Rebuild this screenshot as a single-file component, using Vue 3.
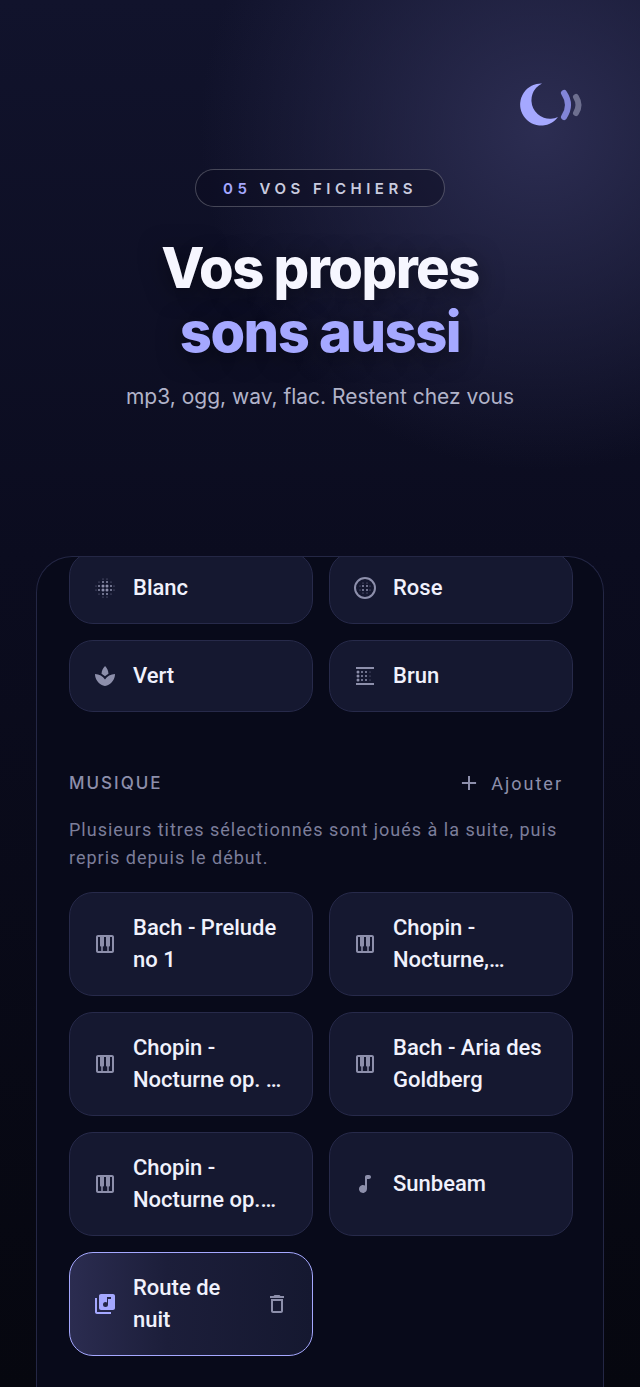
<template>
  <div class="page">
    <header class="hero">
      <div class="logo-row">
        <svg class="logo" viewBox="520 80 64 48" aria-label="logo">
          <path d="M542 83.5A21 21 0 1 0 558 117A18 18 0 0 1 542 83.5Z" fill="#a5a8ff" />
          <path d="M564 93Q572 105 564 117" class="wave wave-one" />
          <path d="M576 97Q581 105 576 113" class="wave wave-two" />
        </svg>
      </div>
      <div class="pill"><span class="pill-num">05</span> VOS FICHIERS</div>
      <h1 class="title">Vos propres<br /><span class="accent">sons aussi</span></h1>
      <p class="subtitle">mp3, ogg, wav, flac. Restent chez vous</p>
    </header>

    <main class="panel">
      <div class="panel-inner">
        <div class="grid">
          <button v-for="noise in noises" :key="noise.name" class="card">
            <svg class="icon" viewBox="0 0 24 24">
              <template v-if="noise.ring"><circle cx="12" cy="12" r="10" fill="none" stroke="currentColor" stroke-width="2" /></template>
              <template v-if="noise.lines"><path d="M3 3h18v2H3zM3 19h18v2H3z" /></template>
              <circle v-for="(d, i) in noise.dots" :key="i" :cx="d[0]" :cy="d[1]" :r="d[2]" />
              <path v-if="noise.path" :d="noise.path" />
            </svg>
            <span class="card-label">{{ noise.name }}</span>
          </button>
        </div>

        <section class="music">
          <div class="section-head">
            <span class="section-title">MUSIQUE</span>
            <span class="add">
              <svg class="add-icon" viewBox="0 0 24 24"><path d="M12 3.5v17M3.5 12h17" /></svg>
              Ajouter
            </span>
          </div>
          <p class="hint">Plusieurs titres sélectionnés sont joués à la suite, puis repris depuis le début.</p>
          <div class="grid">
            <button v-for="track in tracks" :key="track.name" class="card" :class="{ selected: track.own }">
              <svg class="icon" viewBox="0 0 24 24">
                <path :d="track.own ? libraryPath : track.note ? notePath : pianoPath" fill-rule="evenodd" />
              </svg>
              <span class="card-label clamp">{{ track.name }}</span>
              <svg v-if="track.own" class="icon trash" viewBox="0 0 24 24"><path :d="trashPath" /></svg>
            </button>
          </div>
        </section>
      </div>
    </main>
  </div>
</template>

<script setup>
const pianoPath = 'M19 3H5C3.9 3 3 3.9 3 5v14c0 1.1.9 2 2 2h14c1.1 0 2-.9 2-2V5C21 3.9 20.1 3 19 3zM14 14.5h.25V19h-4.5v-4.5H10c.55 0 1-.45 1-1V5h2v8.5C13 14.05 13.45 14.5 14 14.5zM5 5h2v8.5c0 .55.45 1 1 1h.25V19H5V5zM19 19h-3.25v-4.5H16c.55 0 1-.45 1-1V5h2V19z'
const notePath = 'M12 5v8.55c-.94-.54-2.1-.75-3.33-.32-1.34.47-2.37 1.67-2.61 3.07-.46 2.74 1.86 5.08 4.59 4.65 1.96-.31 3.35-2.11 3.35-4.1V7h2c1.1 0 2-.9 2-2s-.9-2-2-2h-2c-1.1 0-2 .9-2 2z'
const libraryPath = 'M20 2H8c-1.1 0-2 .9-2 2v12c0 1.1.9 2 2 2h12c1.1 0 2-.9 2-2V4c0-1.1-.9-2-2-2zm-2 5h-3v5.5a2.5 2.5 0 1 1-2.5-2.5c.57 0 1.08.19 1.5.51V5h4v2zM4 6H2v14c0 1.1.9 2 2 2h14v-2H4V6z'
const trashPath = 'M6 19c0 1.1.9 2 2 2h8c1.1 0 2-.9 2-2V7H6v12zM8 9h8v10H8V9zm7.5-5l-1-1h-5l-1 1H5v2h14V4h-3.5z'
const leafPath = 'M15.49 9.63c-.18-2.79-1.31-5.51-3.43-7.63-2.14 2.14-3.32 4.86-3.55 7.63 1.28.68 2.46 1.56 3.49 2.63 1.03-1.06 2.21-1.94 3.49-2.63zM12 15.45C9.85 12.17 6.18 10 2 10c0 5.32 3.36 9.82 8.03 11.49.63.23 1.29.4 1.97.51.68-.12 1.33-.29 1.97-.51C18.64 19.82 22 15.32 22 10c-4.18 0-7.85 2.17-10 5.45z'

function blurOn() {
  const pos = [3, 6, 10, 14, 18, 21]
  const size = { 3: 0, 21: 0, 6: 1, 18: 1, 10: 2, 14: 2 }
  const dots = []
  for (const x of pos) {
    for (const y of pos) {
      const a = size[x]
      const b = size[y]
      if (a + b < 2) continue
      dots.push([x, y, a + b >= 4 ? 1.5 : a + b === 3 ? 1 : 0.5])
    }
  }
  return dots
}

function blurCircular() {
  const pos = [7, 10, 14, 17]
  const dots = []
  for (const x of pos) {
    for (const y of pos) {
      const inX = x === 10 || x === 14
      const inY = y === 10 || y === 14
      if (inX && inY) dots.push([x, y, 1])
      else if (inX || inY) dots.push([x, y, 0.5])
    }
  }
  return dots
}

function blurLinear() {
  const dots = []
  for (const y of [8, 12, 16]) {
    dots.push([5, y, 1.5], [9, y, 1], [13, y, 1], [17, y, 0.5])
  }
  return dots
}

const noises = [
  { name: 'Blanc', dots: blurOn() },
  { name: 'Rose', dots: blurCircular(), ring: true },
  { name: 'Vert', path: leafPath },
  { name: 'Brun', dots: blurLinear(), lines: true },
]

const tracks = [
  { name: 'Bach - Prelude no 1' },
  { name: 'Chopin - Nocturne, Lento con gran espressione' },
  { name: 'Chopin - Nocturne op. 9 no 2' },
  { name: 'Bach - Aria des Goldberg' },
  { name: 'Chopin - Nocturne op. 55 no 1' },
  { name: 'Sunbeam', note: true },
  { name: 'Route de nuit', own: true },
]
</script>

<style scoped>
.page {
  width: 640px;
  height: 1387px;
  overflow: hidden;
  display: flex;
  flex-direction: column;
  font-family: Inter, sans-serif;
  color: #f4f5ff;
  background:
    radial-gradient(circle 340px at 540px 130px, #2c2d52 0%, rgba(44, 45, 82, 0) 100%),
    linear-gradient(180deg, #11132c 0%, #0b0c1f 40%, #06070f 100%);
}

.hero {
  display: flex;
  flex-direction: column;
  align-items: center;
  padding-top: 80px;
  height: 476px;
  box-sizing: border-box;
  flex-shrink: 0;
}

.logo-row {
  align-self: stretch;
  display: flex;
  justify-content: flex-end;
  padding-right: 56px;
}

.logo {
  width: 64px;
  height: 48px;
}

.wave {
  fill: none;
  stroke-width: 6;
  stroke-linecap: round;
}

.wave-one {
  stroke: #8285d8;
}

.wave-two {
  stroke: #6d6f8f;
}

.pill {
  margin-top: 41px;
  box-sizing: border-box;
  width: 250px;
  height: 38px;
  display: flex;
  align-items: center;
  justify-content: center;
  white-space: pre;
  border: 1px solid rgba(255, 255, 255, 0.24);
  border-radius: 19px;
  background: rgba(10, 11, 32, 0.45);
  color: #c9cbdf;
  font-size: 15px;
  font-weight: 600;
  letter-spacing: 4.5px;
}

.pill-num {
  color: #a5a8ff;
}

.title {
  margin: 29px 0 0;
  text-align: center;
  font-size: 56px;
  line-height: 64px;
  font-weight: 800;
  letter-spacing: -1.5px;
  color: #f6f6ff;
  text-shadow: 0 4px 24px rgba(0, 0, 0, 0.5);
}

.accent {
  color: #a5a8ff;
}

.subtitle {
  margin: 17px 0 0;
  font-size: 21px;
  line-height: 32px;
  color: #b1b3c9;
}

.panel {
  margin: 80px 36px 0;
  flex: 1;
  min-height: 0;
  overflow: hidden;
  border: 1px solid #242745;
  border-bottom: none;
  border-radius: 36px 36px 0 0;
  background: #080a1a;
}

.panel-inner {
  margin-top: -5px;
  padding: 0 30px 0 32px;
}

.grid {
  display: grid;
  grid-template-columns: 244px 244px;
  gap: 16px;
}

.card {
  box-sizing: border-box;
  display: flex;
  align-items: center;
  gap: 16px;
  padding: 19px 23px;
  border: 1px solid #272a4a;
  border-radius: 24px;
  background: #151830;
  color: #f0f1fc;
  font-family: Roboto, sans-serif;
  font-size: 22px;
  line-height: 32px;
  font-weight: 500;
  text-align: left;
}

.icon {
  width: 24px;
  height: 24px;
  flex-shrink: 0;
  fill: #8d8fab;
  color: #8d8fab;
}

.card-label {
  flex: 1;
  min-width: 0;
}

.clamp {
  display: -webkit-box;
  -webkit-box-orient: vertical;
  -webkit-line-clamp: 2;
  overflow: hidden;
}

.selected {
  border: 1.5px solid #a5a8ff;
  background: linear-gradient(90deg, #2b2c50 0%, #1c1e3a 40%, #151830 100%);
}

.selected .icon {
  fill: #a5a8ff;
}

.selected .trash {
  fill: #8d8fab;
}

.music {
  margin-top: 56px;
}

.section-head {
  display: flex;
  justify-content: space-between;
  align-items: center;
  height: 30px;
  padding-right: 10px;
}

.section-title {
  font-size: 17px;
  font-weight: 500;
  letter-spacing: 2px;
  color: #8d8fab;
}

.add {
  display: flex;
  align-items: center;
  gap: 12px;
  font-family: Roboto, sans-serif;
  font-size: 18px;
  letter-spacing: 2px;
  color: #8d8fab;
}

.add-icon {
  width: 20px;
  height: 20px;
  fill: none;
  stroke: #8d8fab;
  stroke-width: 2.4;
}

.hint {
  margin: 18px 0 20px;
  width: 500px;
  font-family: Roboto, sans-serif;
  font-size: 18px;
  line-height: 28px;
  letter-spacing: 1px;
  color: #7c7e9a;
}
</style>
